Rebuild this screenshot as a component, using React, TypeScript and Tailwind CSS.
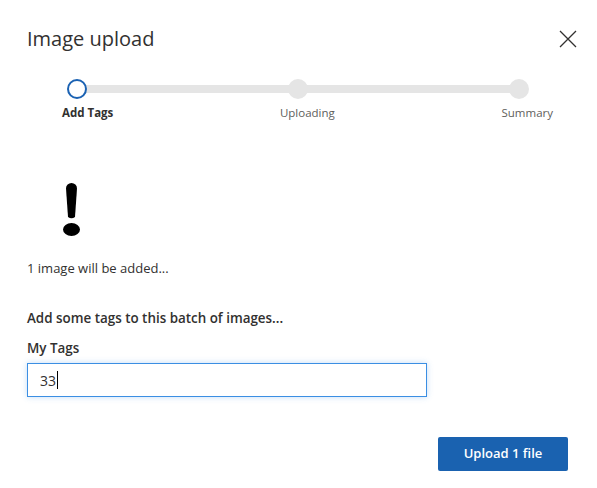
import React from 'react';

const steps = [
  { label: 'Add Tags', active: true },
  { label: 'Uploading', active: false },
  { label: 'Summary', active: false },
];

const App: React.FC = () => {
  return (
    <div className="w-[597px] h-[488px] bg-white text-[#323130] font-['Open_Sans','Noto_Sans',sans-serif] flex flex-col">
      {/* Header */}
      <div className="flex items-center justify-between pl-[27px] pr-[20px] pt-6">
        <h1 className="text-[20px] leading-[28px] font-normal text-[#323130] pt-px">Image upload</h1>
        <button className="w-[18px] h-[18px] flex items-center justify-center text-[#323130]">
          <svg className="w-[18px] h-[18px]" viewBox="0 0 18 18" fill="none" stroke="currentColor" strokeWidth={1.3}>
            <path d="M1 1L17 17M17 1L1 17" />
          </svg>
        </button>
      </div>

      {/* Stepper */}
      <div className="pl-[27px] mt-[26px]">
        <div className="relative ml-[40px] w-[462px] h-[20px]">
          <div className="absolute left-[10px] right-[10px] top-[6px] h-[8px] bg-[#e5e5e5]" />
          <div className="relative flex justify-between">
            {steps.map((s) => (
              <div
                key={s.label}
                className={
                  s.active
                    ? 'w-[20px] h-[20px] rounded-full border-2 border-[#1b62b3] bg-white'
                    : 'w-[20px] h-[20px] rounded-full bg-[#e5e5e5]'
                }
              />
            ))}
          </div>
        </div>
        <div className="ml-[35px] w-[491px] flex justify-between mt-[6px] text-[11.5px] leading-[16px]">
          {steps.map((s) => (
            <span key={s.label} className={s.active ? 'font-bold text-[#323130]' : 'text-[#605e5c]'}>
              {s.label}
            </span>
          ))}
        </div>
      </div>

      {/* Body */}
      <div className="pl-[27px] flex flex-col">
        <svg className="ml-[36px] mt-[62px] w-[17px] h-[53px]" viewBox="0 0 17 53" fill="#000">
          <path d="M3 5.5A5.5 5.5 0 0 1 14 5.5L12 34Q8.5 36.5 5 34Z" />
          <ellipse cx="8.5" cy="46.5" rx="8.5" ry="6.5" />
        </svg>
        <p className="mt-[23px] text-[13px] leading-[18px]">1 image will be added...</p>
        <p className="mt-[31px] text-[13.4px] leading-[20px] font-semibold">Add some tags to this batch of images...</p>
        <p className="mt-[10px] text-[13.4px] leading-[20px] font-semibold">My Tags</p>
        <div className="mt-[5px] w-[400px] h-[34px] border border-[#3b8fe3] shadow-[0_0_6px_rgba(59,143,227,0.3)] flex items-center px-[12px] text-[14px] text-[#323130]">
          <span>33</span>
          <span className="w-px h-[18px] bg-[#000] ml-px" />
        </div>
      </div>

      {/* Footer */}
      <div className="flex justify-end pr-[29px] mt-[40px]">
        <button className="w-[130px] h-[34px] rounded-[2px] bg-[#1a62b0] text-white text-[13px] font-semibold">
          Upload 1 file
        </button>
      </div>
    </div>
  );
};

export default App;
